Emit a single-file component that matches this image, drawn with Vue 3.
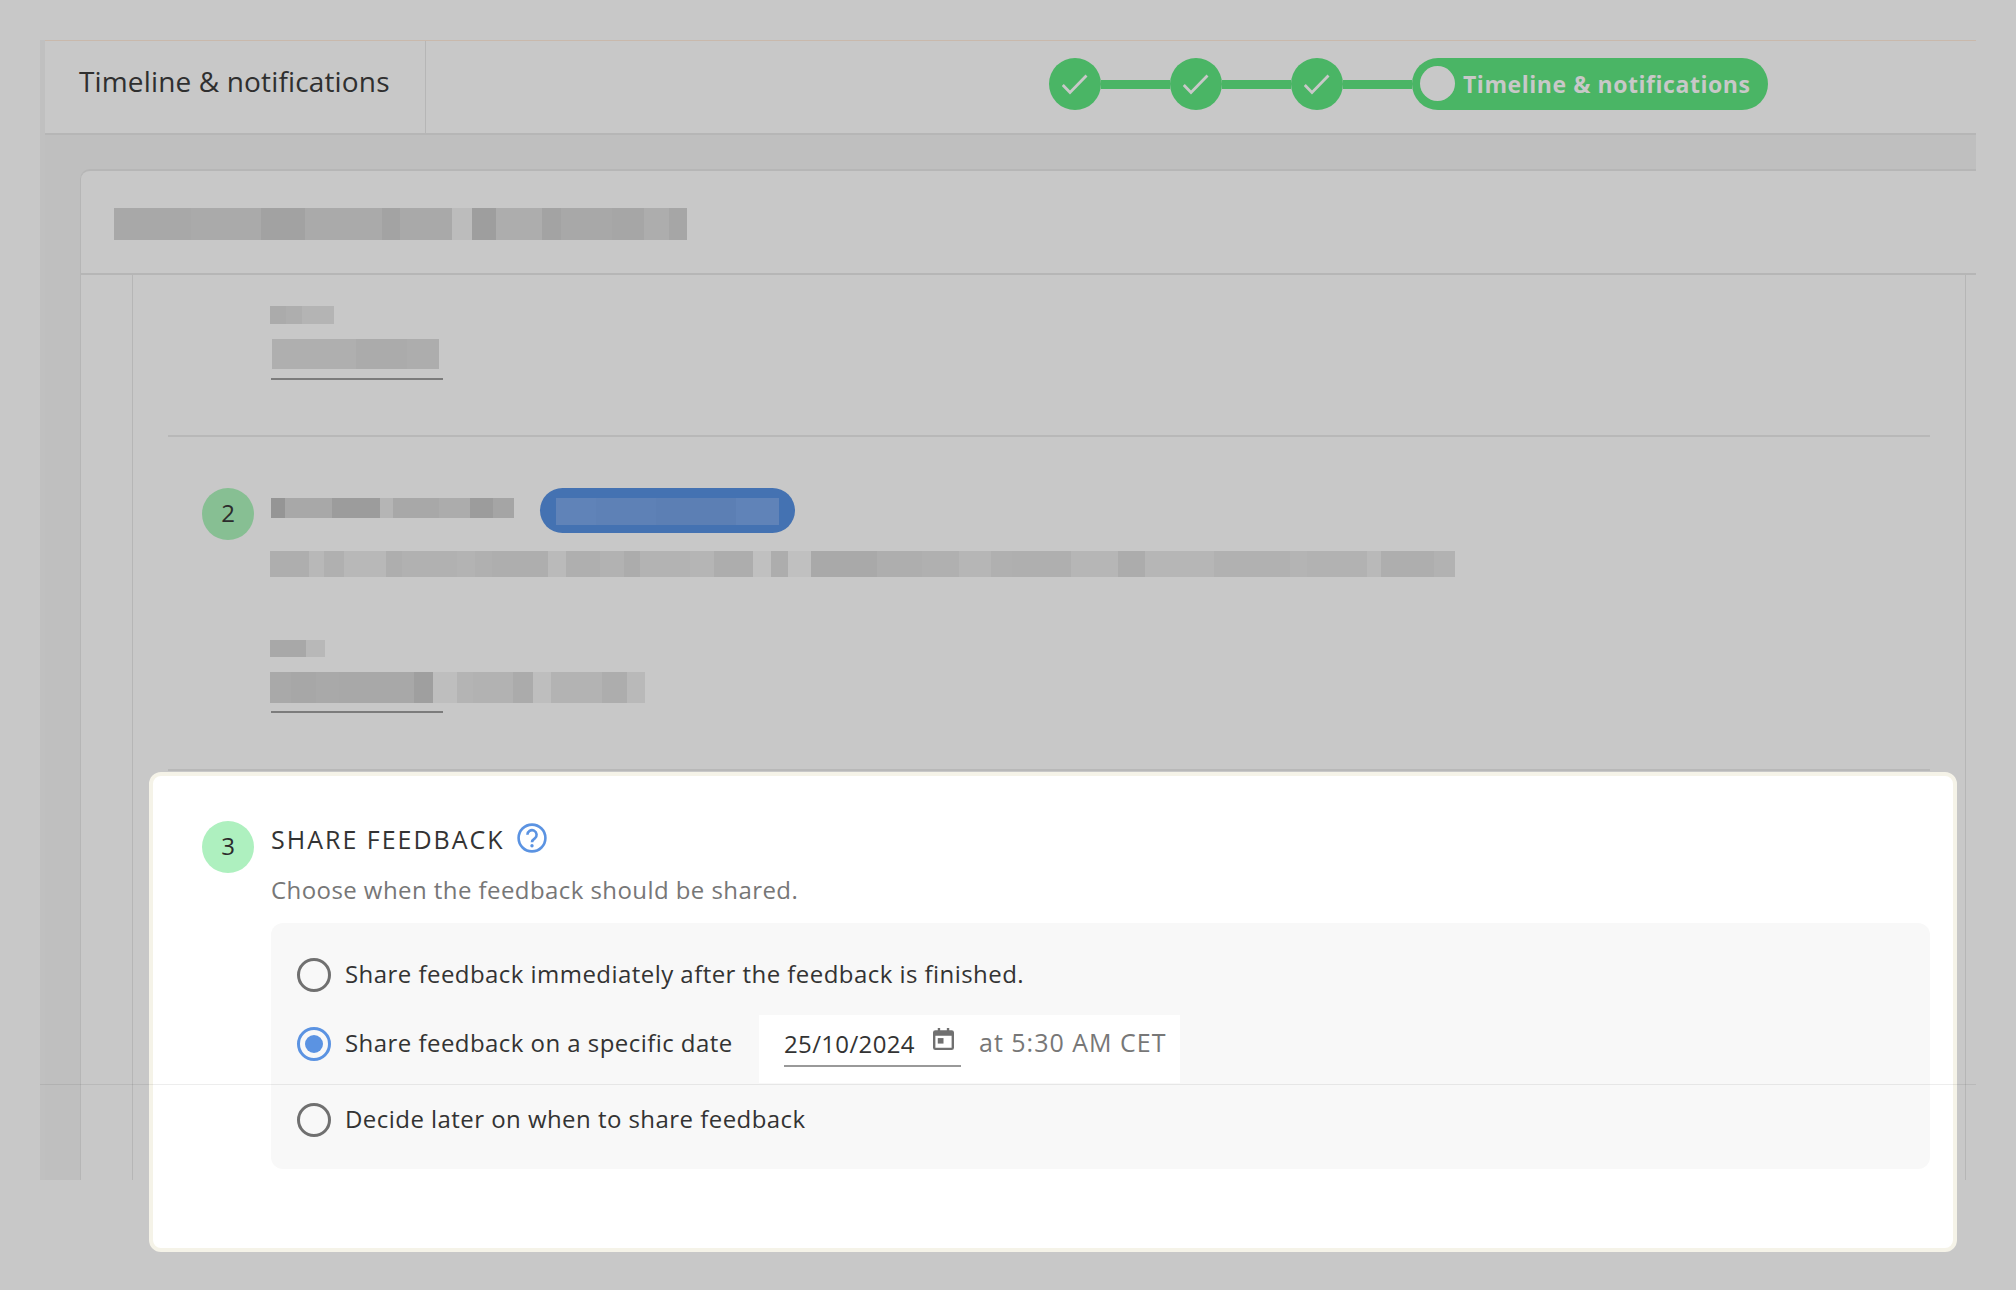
<script setup>
const heading = [[77,168],[70,170],[44,162],[77,170],[18,163],[52,169],[20,188],[24,158],[46,173],[19,163],[51,168],[32,166],[25,173],[18,166]]
const s1Label = [[16,171],[16,174],[32,180]]
const s1Value = [[84,175],[51,171],[32,173]]
const s2Title = [[14,149],[47,168],[48,156],[13,181],[46,168],[31,172],[23,156],[21,165]]
const s2Desc = [[39,174],[15,184],[20,176],[42,184],[16,174],[55,177],[18,179],[17,176],[56,174],[18,186],[34,175],[24,178],[16,172],[50,179],[24,181],[39,173],[18,192],[17,173],[23,192],[66,169],[45,174],[37,176],[32,182],[21,176],[59,175],[47,182],[27,172],[69,182],[76,177],[17,180],[60,178],[14,185],[53,174],[21,178]]
const s2Label = [[36,168],[19,184]]
const s2Value = [[21,169],[25,167],[23,169],[75,168],[19,159],[24,190],[16,180],[40,178],[20,171],[18,190],[51,179],[25,173],[18,185]]
const pillInner = [[40,96],[60,94],[80,92],[43,96]]
const grey = v => `rgb(${v},${v},${v})`
const steps = [1, 2, 3]
const options = [
  { text: 'Share feedback immediately after the feedback is finished.', on: false },
  { text: 'Share feedback on a specific date', on: true, date: true },
  { text: 'Decide later on when to share feedback', on: false }
]
</script>

<template>
  <div class="page">
    <div class="shell">
      <header class="head">
        <div class="tab">Timeline &amp; notifications</div>
        <div class="stepper">
          <template v-for="s in steps" :key="s">
            <span class="step">
              <svg width="26" height="26" viewBox="0 0 26 26"><path d="M0.800 14l7.200 7.500L24.500 4.500" fill="none" stroke="#c8c8c8" stroke-width="2.800"/></svg>
            </span>
            <span class="link"></span>
          </template>
          <span class="pill"><span class="dot"></span>Timeline &amp; notifications</span>
        </div>
      </header>
      <main class="content">
        <section class="card">
          <div class="card-head">
            <div class="blur h32">
              <i v-for="(p, i) in heading" :key="i" :style="{ width: p[0] + 'px', background: grey(p[1]) }"></i>
            </div>
          </div>
          <div class="card-body">
            <div class="sec sec-one">
              <div class="blur h18">
                <i v-for="(p, i) in s1Label" :key="i" :style="{ width: p[0] + 'px', background: grey(p[1]) }"></i>
              </div>
              <div class="field">
                <div class="blur h30 inset">
                  <i v-for="(p, i) in s1Value" :key="i" :style="{ width: p[0] + 'px', background: grey(p[1]) }"></i>
                </div>
              </div>
            </div>
            <div class="rule first"></div>
            <div class="sec sec-two">
              <div class="num dim">2</div>
              <div class="sec-main">
                <div class="title-row">
                  <div class="blur h20">
                    <i v-for="(p, i) in s2Title" :key="i" :style="{ width: p[0] + 'px', background: grey(p[1]) }"></i>
                  </div>
                  <div class="badge">
                    <div class="blur h27">
                      <i v-for="(p, i) in pillInner" :key="i" :style="{ width: p[0] + 'px', background: `rgb(${p[1]},${p[1]+35},${p[1]+88})` }"></i>
                    </div>
                  </div>
                </div>
                <div class="blur h26 desc">
                  <i v-for="(p, i) in s2Desc" :key="i" :style="{ width: p[0] + 'px', background: grey(p[1]) }"></i>
                </div>
                <div class="blur h17 lab2">
                  <i v-for="(p, i) in s2Label" :key="i" :style="{ width: p[0] + 'px', background: grey(p[1]) }"></i>
                </div>
                <div class="blur h31 val2">
                  <i v-for="(p, i) in s2Value" :key="i" :style="{ width: p[0] + 'px', background: grey(p[1]) }"></i>
                </div>
                <div class="under"></div>
              </div>
            </div>
            <div class="rule"></div>
          </div>
        </section>
      </main>
    </div>

    <section class="focus">
      <div class="num">3</div>
      <div class="focus-main">
        <h2 class="f-title">SHARE FEEDBACK
          <svg class="help" width="30" height="30" viewBox="0 0 30 30">
            <circle cx="15" cy="15" r="13.400" fill="none" stroke="#5b93e2" stroke-width="2.600"/>
            <path d="M10.400 11.800a4.600 4.600 0 1 1 7.400 3.600c-1.700 1.100-2.800 2-2.800 3.800" fill="none" stroke="#5b93e2" stroke-width="2.600"/>
            <circle cx="15" cy="22.800" r="1.700" fill="#5b93e2"/>
          </svg>
        </h2>
        <p class="f-sub">Choose when the feedback should be shared.</p>
        <div class="panel">
          <div v-for="o in options" :key="o.text" class="opt" :class="{ 'opt-date': o.date }">
            <span class="radio" :class="{ on: o.on }"></span>
            <span class="opt-text">{{ o.text }}</span>
            <div v-if="o.date" class="datebox">
              <div class="dateinput">
                <span>25/10/2024</span>
                <svg class="cal" width="21" height="22" viewBox="0 0 22 24" preserveAspectRatio="none">
                  <path d="M5 0h2.500v2.500h7V0H17v2.500h2.500A2.500 2.500 0 0 1 22 5v16.500a2.500 2.500 0 0 1-2.500 2.500h-17A2.500 2.500 0 0 1 0 21.500V5a2.500 2.500 0 0 1 2.500-2.500H5zM2.500 8.500v13h17v-13z" fill="#707070"/>
                  <rect x="5" y="11" width="6" height="6" fill="#707070"/>
                </svg>
              </div>
              <span class="at">at 5:30 AM CET</span>
            </div>
          </div>
        </div>
      </div>
    </section>
    <div class="footline"></div>
  </div>
</template>

<style>
html, body { margin: 0; background: #c8c8c8; }
</style>

<style scoped>
.page {
  position: relative;
  width: 2016px;
  height: 1290px;
  box-sizing: border-box;
  padding: 40px 40px 110px;
  background: #c8c8c8;
  font-family: "Open Sans", "Noto Sans", sans-serif;
  overflow: hidden;
}
.shell {
  height: 100%;
  display: flex;
  flex-direction: column;
  border-left: 5px solid #c0c0c0;
}
.head {
  height: 95px;
  flex: none;
  box-sizing: border-box;
  display: flex;
  align-items: stretch;
  border-top: 1px solid #c9b9ac;
  border-bottom: 2px solid #b6b6b6;
}
.tab {
  width: 381px;
  box-sizing: border-box;
  padding: 19px 0 0 34px;
  border-right: 1px solid #b6b6b6;
  font-size: 28px;
  line-height: 42px;
  color: #2f2f2f;
  letter-spacing: 0.15px;
}
.stepper {
  margin: 17px 0 0 623px;
  display: flex;
  align-items: flex-start;
}
.step {
  width: 52px;
  height: 52px;
  flex: none;
  border-radius: 50%;
  background: #4ab565;
  display: flex;
  align-items: center;
  justify-content: center;
}
.link {
  width: 69px;
  height: 9px;
  margin-top: 22px;
  background: #4ab565;
}
.pill {
  height: 52px;
  width: 356px;
  box-sizing: border-box;
  padding: 0 0 1px 8px;
  border-radius: 26px;
  background: #4ab565;
  display: flex;
  align-items: center;
  gap: 8px;
  color: #c8c8c8;
  font-size: 23px;
  font-weight: 700;
  letter-spacing: 0.55px;
  white-space: nowrap;
}
.dot {
  width: 35px;
  height: 35px;
  border-radius: 50%;
  background: #c8c8c8;
}
.content {
  flex: 1;
  min-height: 0;
  background: #bfbfbf;
  padding: 34px 0 0 35px;
}
.card {
  height: 100%;
  display: flex;
  flex-direction: column;
  box-sizing: border-box;
  background: #c8c8c8;
  border-top: 2px solid #b6b6b6;
  border-left: 1px solid #b6b6b6;
  border-top-left-radius: 10px;
}
.card-head {
  height: 104px;
  flex: none;
  box-sizing: border-box;
  padding: 37px 0 0 33px;
  border-bottom: 2px solid #b6b6b6;
}
.card-body {
  flex: 1;
  margin: 0 10px 0 51px;
  border-left: 1px solid #b6b6b6;
  border-right: 1px solid #b6b6b6;
}
.blur { display: flex; width: fit-content; }
.blur i { display: block; height: 100%; flex: none; }
.h32 { height: 32px; }
.h18 { height: 18px; }
.h30 { height: 30px; }
.h20 { height: 20px; }
.h27 { height: 27px; }
.h26 { height: 26px; }
.h17 { height: 17px; }
.h31 { height: 31px; }
.sec-one { padding: 31px 0 0 137px; }
.field { width: 172px; margin-top: 15px; padding-bottom: 9px; border-bottom: 2px solid #7c7c7c; margin-left: 1px; }
.inset { margin-left: 1px; }
.rule {
  height: 2px;
  margin: 56px 35px 0 35px;
  background: #b8b8b8;
}
.rule.first { margin-top: 55px; }
.sec-two {
  display: flex;
  gap: 17px;
  padding: 51px 0 0 69px;
}
.num {
  width: 52px;
  height: 52px;
  flex: none;
  box-sizing: border-box;
  padding-bottom: 3px;
  border-radius: 50%;
  background: #aef0bf;
  color: #2c2c2c;
  font-size: 24px;
  display: flex;
  align-items: center;
  justify-content: center;
}
.num.dim { background: #87bf93; }
.title-row { display: flex; align-items: flex-start; gap: 26px; }
.title-row > .blur { margin-top: 10px; }
.badge {
  width: 255px;
  height: 45px;
  box-sizing: border-box;
  padding: 10px 0 0 16px;
  border-radius: 23px;
  background: #4472b2;
}
.desc { margin: 18px 0 0 -1px; }
.lab2 { margin: 63px 0 0 -1px; }
.val2 { margin: 15px 0 0 -1px; }
.under { width: 172px; height: 2px; margin-top: 8px; background: #7c7c7c; }

.focus {
  position: absolute;
  left: 149px;
  top: 772px;
  width: 1808px;
  height: 480px;
  box-sizing: border-box;
  padding: 45px 0 0 49px;
  display: flex;
  gap: 17px;
  background: #fff;
  border: 4px solid #f5f3e8;
  border-radius: 12px;
}
.focus-main { flex: 1; margin-right: 23px; }
.f-title {
  margin: 0;
  height: 38px;
  box-sizing: border-box;
  padding-bottom: 1px;
  display: flex;
  align-items: center;
  gap: 12px;
  font-size: 25px;
  font-weight: 400;
  line-height: 37px;
  letter-spacing: 2px;
  color: #333;
}
.help { flex: none; margin-top: -3px; }
.f-sub {
  margin: 14px 0 0;
  font-size: 24px;
  line-height: 34px;
  letter-spacing: 0.43px;
  color: #777;
}
.panel {
  margin-top: 16px;
  height: 246px;
  box-sizing: border-box;
  padding: 35px 0 0 26px;
  border-radius: 12px;
  background: #f8f8f8;
}
.opt {
  height: 34px;
  display: flex;
  align-items: center;
  gap: 14px;
  font-size: 24px;
  letter-spacing: 0.45px;
  color: #333;
}
.opt + .opt { margin-top: 35px; }
.opt-date + .opt { margin-top: 42px; }
.opt-text { padding-bottom: 3px; }
.opt-date .opt-text { width: 400px; flex: none; }
.radio {
  width: 34px;
  height: 34px;
  flex: none;
  box-sizing: border-box;
  border: 3px solid #707070;
  border-radius: 50%;
}
.radio.on {
  position: relative;
  border-color: #5b93e2;
}
.radio.on::after {
  content: "";
  position: absolute;
  inset: 5px;
  border-radius: 50%;
  background: #5b93e2;
}
.datebox {
  width: 421px;
  height: 68px;
  flex: none;
  align-self: flex-start;
  box-sizing: border-box;
  margin-top: -12px;
  padding-left: 25px;
  background: #fff;
  display: flex;
  align-items: flex-start;
  gap: 18px;
  letter-spacing: 0;
}
.dateinput {
  width: 177px;
  height: 52px;
  box-sizing: border-box;
  border-bottom: 2px solid #999;
  display: flex;
  justify-content: space-between;
  padding: 12px 7px 0 0;
  font-size: 24px;
  line-height: 34px;
  letter-spacing: 0.35px;
  color: #333;
}
.cal { margin-top: 1px; }
.at {
  padding-top: 10px;
  font-size: 25px;
  line-height: 34px;
  letter-spacing: 1px;
  color: #777;
}
.footline {
  position: absolute;
  left: 40px;
  top: 1084px;
  width: 1936px;
  height: 1px;
  background: rgba(0, 0, 0, 0.07);
}
</style>
